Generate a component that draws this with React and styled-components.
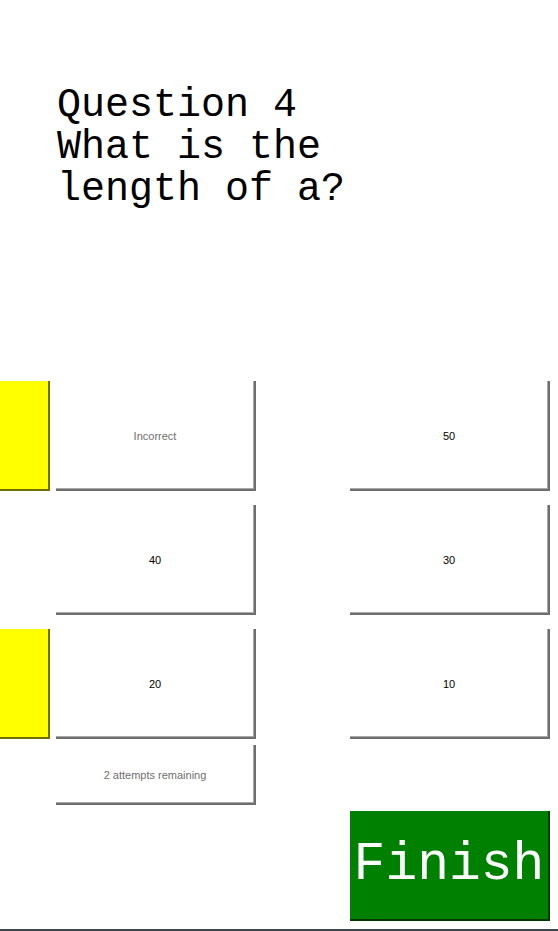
import React from "react";
import styled, { createGlobalStyle } from "styled-components";

const Global = createGlobalStyle`
  html, body { margin: 0; padding: 0; background: #ffffff; }
  body { width: 558px; height: 931px; overflow: hidden; }
`;

const Page = styled.div`
  position: relative;
  width: 558px;
  height: 931px;
  box-sizing: border-box;
  padding-top: 85px;
  display: flex;
  flex-direction: column;
`;

const Question = styled.h1`
  margin: 0 0 0 57px;
  font-family: "Liberation Mono", "Courier New", monospace;
  font-weight: normal;
  font-size: 40px;
  line-height: 42px;
  color: #000;
  white-space: pre;
`;

const Rows = styled.div`
  margin-top: 170px;
  display: flex;
  flex-direction: column;
`;

const Row = styled.div`
  display: flex;
  align-items: flex-start;
  height: ${(p) => p.$h || 110}px;
  margin-top: ${(p) => p.$mt || 0}px;
`;

const Marker = styled.div`
  box-sizing: border-box;
  flex: none;
  width: 50px;
  height: 110px;
  background: ${(p) => (p.$on ? "#ffff00" : "transparent")};
  border-right: ${(p) => (p.$on ? "2px solid #707000" : "none")};
  border-bottom: ${(p) => (p.$on ? "2px solid #707000" : "none")};
`;

const Answer = styled.button`
  box-sizing: border-box;
  flex: none;
  width: 200px;
  height: ${(p) => p.$h || 110}px;
  margin-left: ${(p) => p.$ml || 0}px;
  padding: 2px 0 0;
  background: #ffffff;
  border: none;
  border-right: 2px solid #6e6e6e;
  border-bottom: 2px solid #6e6e6e;
  box-shadow: inset -1px -1px 0 #a8a8a8;
  font-family: "Liberation Sans", Arial, sans-serif;
  font-size: 11px;
  color: ${(p) => (p.$muted ? "#6f6f6f" : "#000000")};
  display: flex;
  align-items: center;
  justify-content: center;
  cursor: pointer;
`;

const Finish = styled.button`
  box-sizing: border-box;
  width: 200px;
  height: 110px;
  margin-left: 350px;
  margin-top: 6px;
  padding: 0;
  background: #008000;
  border: none;
  border-right: 2px solid #003a00;
  border-bottom: 2px solid #003a00;
  color: #ffffff;
  font-family: "Liberation Mono", "Courier New", monospace;
  font-size: 53px;
  display: flex;
  align-items: center;
  justify-content: center;
  cursor: pointer;
`;

const Footer = styled.div`
  position: absolute;
  left: 0;
  right: 0;
  bottom: 0;
  height: 2px;
  background: #3e4852;
`;

const rows = [
  { marker: true, left: "Incorrect", leftMuted: true, right: "50" },
  { marker: false, left: "40", right: "30" },
  { marker: true, left: "20", right: "10" },
];

export default function App() {
  return (
    <>
      <Global />
      <Page>
        <Question>{"Question 4\nWhat is the\nlength of a?"}</Question>
        <Rows>
          {rows.map((r, i) => (
            <Row key={i} $mt={i === 0 ? 0 : 14}>
              <Marker $on={r.marker} />
              <Answer $ml={6} $muted={r.leftMuted}>{r.left}</Answer>
              <Answer $ml={94}>{r.right}</Answer>
            </Row>
          ))}
          <Row $mt={6} $h={60}>
            <Marker />
            <Answer $ml={6} $h={60} $muted>2 attempts remaining</Answer>
          </Row>
          <Finish>Finish</Finish>
        </Rows>
        <Footer />
      </Page>
    </>
  );
}
